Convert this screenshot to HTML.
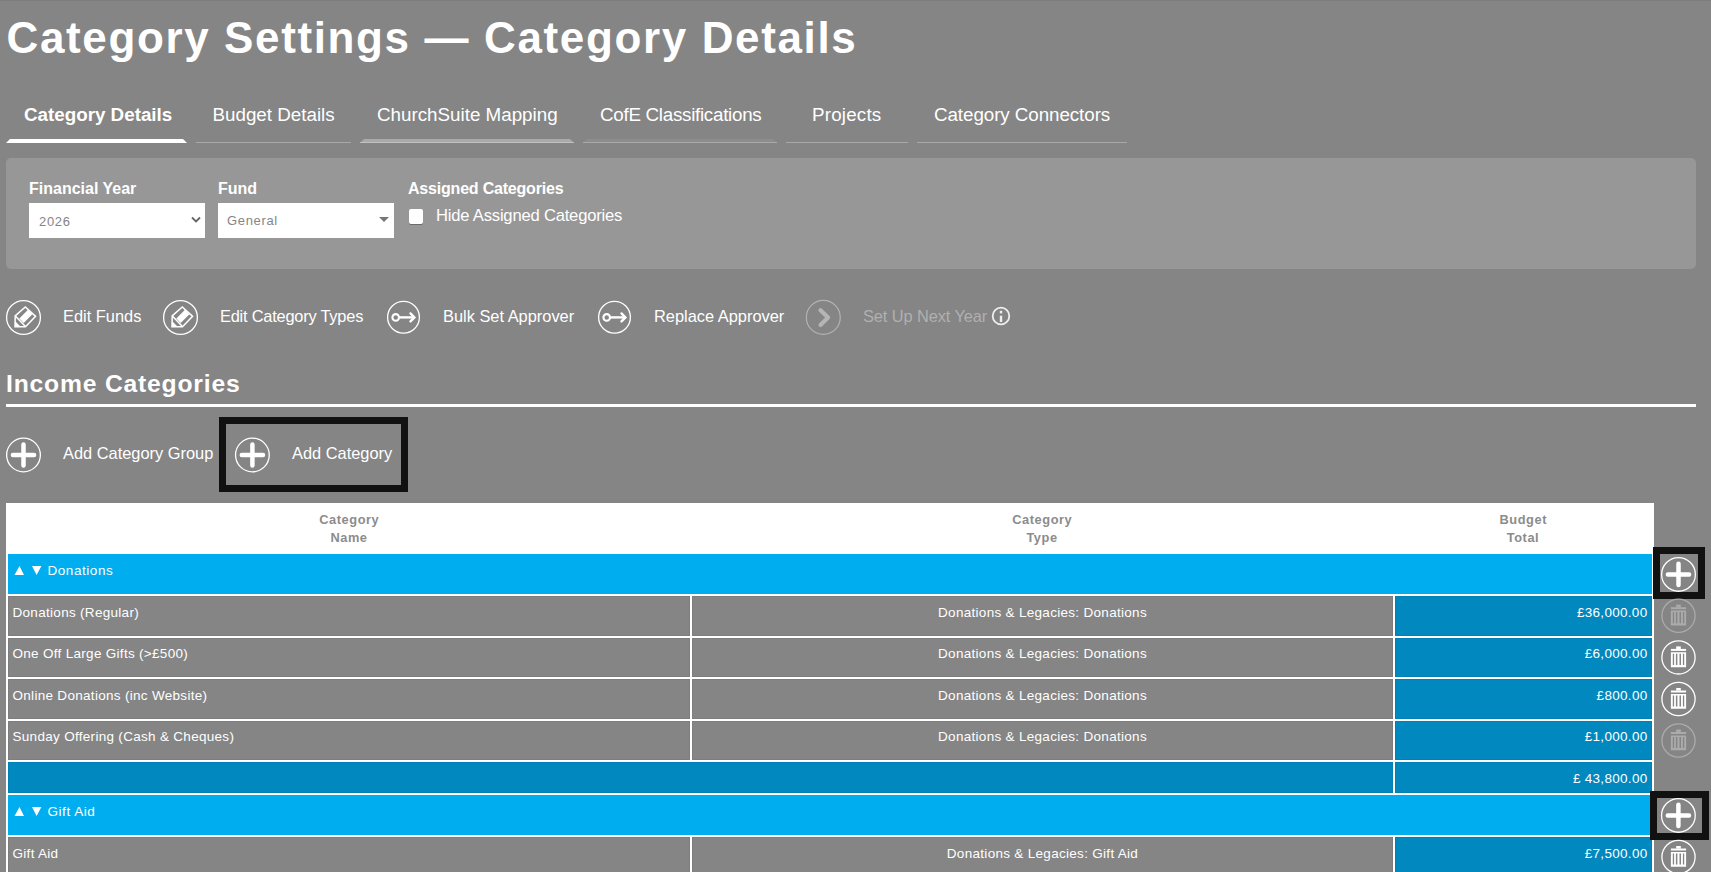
<!DOCTYPE html>
<html><head><meta charset="utf-8">
<style>
html,body{margin:0;padding:0;}
body{width:1711px;height:872px;overflow:hidden;position:relative;background:#858585;font-family:"Liberation Sans",sans-serif;color:#fff;}
.a{position:absolute;}
.t{position:absolute;white-space:nowrap;line-height:1;}
.b{font-weight:700;}
.bar{position:absolute;height:4px;}
.cell{position:absolute;box-sizing:border-box;border:1px solid rgba(0,0,0,0.055);}
.g{background:#858585;}
.db{background:#0088bf;}
.lb{background:#00aeef;}
svg{position:absolute;overflow:visible;}
.td{font-size:13.5px;letter-spacing:0.3px;color:#fff}
</style></head><body>
<div class="a" style="left:0;top:0;width:1711px;height:1px;background:#7d7d7d"></div>

<!-- Title -->
<div class="t b" id="title" style="left:6.5px;top:16px;font-size:44px;letter-spacing:1.63px">Category Settings — Category Details</div>

<!-- Tabs -->
<div class="t b" style="left:24px;top:106px;font-size:18.8px">Category Details</div>
<div class="t" style="left:212.5px;top:106px;font-size:18.8px">Budget Details</div>
<div class="t" style="left:377px;top:106px;font-size:18.8px">ChurchSuite Mapping</div>
<div class="t" style="left:600px;top:106px;font-size:18.8px;letter-spacing:-0.28px">CofE Classifications</div>
<div class="t" style="left:812px;top:106px;font-size:18.8px;letter-spacing:0.2px">Projects</div>
<div class="t" style="left:934px;top:106px;font-size:18.8px;letter-spacing:-0.07px">Category Connectors</div>

<div class="bar" style="left:6px;top:139px;width:181px;background:#fff;clip-path:polygon(4px 0,177px 0,181px 4px,0 4px)"></div>
<div class="a" style="left:196px;top:142px;width:155px;height:1px;background:#a9a9a9"></div>
<div class="bar" style="left:360px;top:139px;width:214px;background:#aaaaaa;clip-path:polygon(4px 0,210px 0,214px 4px,0 4px)"></div>
<div class="a" style="left:360px;top:142px;width:214px;height:1px;background:#c0c0c0"></div>
<div class="bar" style="left:583px;top:139px;width:194px;background:#8d8d8d;clip-path:polygon(4px 0,190px 0,194px 4px,0 4px)"></div>
<div class="a" style="left:583px;top:142px;width:194px;height:1px;background:#a9a9a9"></div>
<div class="a" style="left:786px;top:142px;width:122px;height:1px;background:#a9a9a9"></div>
<div class="a" style="left:917px;top:142px;width:210px;height:1px;background:#a9a9a9"></div>

<!-- Panel -->
<div class="a" style="left:6px;top:158px;width:1690px;height:111px;background:#979797;border-radius:5px"></div>
<div class="t b" style="left:29px;top:181px;font-size:16px">Financial Year</div>
<div class="t b" style="left:218px;top:181px;font-size:16px">Fund</div>
<div class="t b" style="left:408px;top:181px;font-size:16px;letter-spacing:-0.2px">Assigned Categories</div>

<div class="a" style="left:29px;top:203px;width:176px;height:35px;background:#fff"></div>
<div class="t" style="left:39px;top:215px;font-size:13px;color:#858585;letter-spacing:0.7px">2026</div>
<svg style="left:191px;top:216px" width="10" height="8"><path d="M1 1.5 L5 5.5 L9 1.5" fill="none" stroke="#666" stroke-width="1.8"/></svg>

<div class="a" style="left:218px;top:203px;width:176px;height:35px;background:#fff"></div>
<div class="t" style="left:227px;top:214px;font-size:13px;color:#858585;letter-spacing:0.65px">General</div>
<svg style="left:379px;top:217px" width="10" height="6"><path d="M0 0 L10 0 L5 5 Z" fill="#777"/></svg>

<div class="a" style="left:409px;top:209px;width:14px;height:15px;background:#fff;border-radius:2px;box-shadow:0 1px 0 #6a6a6a"></div>
<div class="t" style="left:436px;top:208px;font-size:16.6px;letter-spacing:-0.2px">Hide Assigned Categories</div>

<!-- Action row -->
<svg style="left:0;top:290px" width="1100" height="60">
  <g fill="none" stroke="#fff" stroke-width="1.3">
    <circle cx="23.5" cy="27.5" r="16.9"/>
    <circle cx="180.5" cy="27.5" r="16.9"/>
    <circle cx="403.5" cy="27.3" r="15.9"/>
    <circle cx="614.5" cy="27.3" r="15.9"/>
  </g>
  <g transform="translate(0 0)" fill="none" stroke="#fff" stroke-width="1.5">
    <path d="M15.2 25.9 L25.3 16.9 L35.6 26.4 L25.5 36.7 L15 36.7 Z"/>
    <path d="M15.6 26.3 L25.2 36.3"/>
    <path d="M28.0 19.8 L32.4 24.2 L23.7 32.9 L19.3 28.5 Z" fill="#fff" stroke="none"/>
    <path d="M15 31 L15 36.7 L20.7 36.7 Z" fill="#fff" stroke="none"/>
  </g>
  <g transform="translate(157 0)" fill="none" stroke="#fff" stroke-width="1.5">
    <path d="M15.2 25.9 L25.3 16.9 L35.6 26.4 L25.5 36.7 L15 36.7 Z"/>
    <path d="M15.6 26.3 L25.2 36.3"/>
    <path d="M28.0 19.8 L32.4 24.2 L23.7 32.9 L19.3 28.5 Z" fill="#fff" stroke="none"/>
    <path d="M15 31 L15 36.7 L20.7 36.7 Z" fill="#fff" stroke="none"/>
  </g>
  <g fill="none" stroke="#fff" stroke-width="2.4" stroke-linecap="round">
    <circle cx="395.7" cy="27.4" r="3.3" stroke-width="2.1"/>
    <path d="M399.1 27.4 H414.3" stroke-linecap="butt"/>
    <path d="M410.5 23.4 L414.4 27.4 L410.5 31.4"/>
  </g>
  <g fill="none" stroke="#fff" stroke-width="2.4" stroke-linecap="round">
    <circle cx="606.7" cy="27.4" r="3.3" stroke-width="2.1"/>
    <path d="M610.1 27.4 H625.3" stroke-linecap="butt"/>
    <path d="M621.5 23.4 L625.4 27.4 L621.5 31.4"/>
  </g>
  <circle cx="823.3" cy="27.4" r="16.95" fill="none" stroke="#b3b3b3" stroke-width="1.2"/>
  <path d="M820.5 20.3 L828.1 27.5 L820.5 34.9" fill="none" stroke="#b5b5b5" stroke-width="4.2" stroke-linecap="round" stroke-linejoin="round"/>
  <circle cx="1001" cy="26" r="8.3" fill="none" stroke="#eee" stroke-width="1.8"/>
  <rect x="999.8" y="20.8" width="2.4" height="2.6" fill="#eee"/>
  <rect x="999.8" y="25.7" width="2.4" height="6.3" fill="#eee"/>
</svg>

<div class="t" style="left:63px;top:308px;font-size:16.4px">Edit Funds</div>
<div class="t" style="left:220px;top:308px;font-size:16.4px;letter-spacing:-0.22px">Edit Category Types</div>
<div class="t" style="left:443px;top:308px;font-size:16.4px">Bulk Set Approver</div>
<div class="t" style="left:654px;top:308px;font-size:16.4px">Replace Approver</div>
<div class="t" style="left:863px;top:308px;font-size:16.4px;color:#b0b0b0;letter-spacing:-0.1px">Set Up Next Year</div>

<!-- Income Categories -->
<div class="t b" style="left:6px;top:372px;font-size:24.7px;letter-spacing:0.8px">Income Categories</div>
<div class="a" style="left:6px;top:404px;width:1690px;height:3px;background:#fff"></div>

<svg style="left:0;top:420px" width="300" height="70">
  <g fill="none" stroke="#fff">
    <circle cx="23.5" cy="35" r="16.85" stroke-width="1.3"/>
    <path d="M12.9 35 H34.1 M23.5 24.4 V45.6" stroke-width="4.5" stroke-linecap="round"/>
    <circle cx="252.4" cy="35" r="16.85" stroke-width="1.3"/>
    <path d="M241.8 35 H263 M252.4 24.4 V45.6" stroke-width="4.5" stroke-linecap="round"/>
  </g>
</svg>
<div class="t" style="left:63px;top:445px;font-size:16.4px">Add Category Group</div>
<div class="t" style="left:292px;top:445px;font-size:16.4px">Add Category</div>
<div class="a" style="left:219px;top:417px;width:175px;height:61px;border:7px solid #111"></div>

<!-- Table -->
<div class="a" style="left:6px;top:503px;width:1648px;height:400px;background:#fff"></div>
<div class="t b" style="left:269px;top:511px;width:160px;text-align:center;font-size:12.8px;line-height:18px;color:#8c8c8c;white-space:normal;letter-spacing:0.55px;text-indent:0.55px">Category<br>Name</div>
<div class="t b" style="left:962px;top:511px;width:160px;text-align:center;font-size:12.8px;line-height:18px;color:#8c8c8c;white-space:normal;letter-spacing:0.55px;text-indent:0.55px">Category<br>Type</div>
<div class="t b" style="left:1443px;top:511px;width:160px;text-align:center;font-size:12.8px;line-height:18px;color:#8c8c8c;white-space:normal;letter-spacing:0.55px;text-indent:0.55px">Budget<br>Total</div>

<!--ROWS-->
<div class="a lb" style="left:8px;top:554px;width:1644px;height:40px"></div>
<svg style="left:14px;top:566px" width="30" height="10"><path d="M0.5 9 L5.5 0 L10 9 Z M18 0 L27.4 0 L22.6 9 Z" fill="#fff"/></svg>
<div class="t td" style="left:47.5px;top:564px;letter-spacing:0.55px">Donations</div>
<div class="cell g" style="left:8px;top:596px;width:682px;height:40px"></div>
<div class="cell g" style="left:692px;top:596px;width:701px;height:40px"></div>
<div class="cell db" style="left:1395px;top:596px;width:257px;height:40px"></div>
<div class="t td" style="left:12.5px;top:606px">Donations (Regular)</div>
<div class="t td" style="left:692px;width:701px;text-align:center;top:606px">Donations &amp; Legacies: Donations</div>
<div class="t td" style="right:63.5px;top:606px">£36,000.00</div>
<div class="cell g" style="left:8px;top:638px;width:682px;height:39px"></div>
<div class="cell g" style="left:692px;top:638px;width:701px;height:39px"></div>
<div class="cell db" style="left:1395px;top:638px;width:257px;height:39px"></div>
<div class="t td" style="left:12.5px;top:647px">One Off Large Gifts (&gt;£500)</div>
<div class="t td" style="left:692px;width:701px;text-align:center;top:647px">Donations &amp; Legacies: Donations</div>
<div class="t td" style="right:63.5px;top:647px">£6,000.00</div>
<div class="cell g" style="left:8px;top:679px;width:682px;height:40px"></div>
<div class="cell g" style="left:692px;top:679px;width:701px;height:40px"></div>
<div class="cell db" style="left:1395px;top:679px;width:257px;height:40px"></div>
<div class="t td" style="left:12.5px;top:689px">Online Donations (inc Website)</div>
<div class="t td" style="left:692px;width:701px;text-align:center;top:689px">Donations &amp; Legacies: Donations</div>
<div class="t td" style="right:63.5px;top:689px">£800.00</div>
<div class="cell g" style="left:8px;top:721px;width:682px;height:39px"></div>
<div class="cell g" style="left:692px;top:721px;width:701px;height:39px"></div>
<div class="cell db" style="left:1395px;top:721px;width:257px;height:39px"></div>
<div class="t td" style="left:12.5px;top:729.5px">Sunday Offering (Cash &amp; Cheques)</div>
<div class="t td" style="left:692px;width:701px;text-align:center;top:729.5px">Donations &amp; Legacies: Donations</div>
<div class="t td" style="right:63.5px;top:729.5px">£1,000.00</div>
<div class="cell db" style="left:8px;top:762px;width:1385px;height:31px"></div>
<div class="cell db" style="left:1395px;top:762px;width:257px;height:31px"></div>
<div class="t td" style="right:63.5px;top:772px">£ 43,800.00</div>
<div class="a lb" style="left:8px;top:795px;width:1644px;height:40px"></div>
<svg style="left:14px;top:807px" width="30" height="10"><path d="M0.5 9 L5.5 0 L10 9 Z M18 0 L27.4 0 L22.6 9 Z" fill="#fff"/></svg>
<div class="t td" style="left:47.5px;top:805px;letter-spacing:0.55px">Gift Aid</div>
<div class="cell g" style="left:8px;top:837px;width:682px;height:40px"></div>
<div class="cell g" style="left:692px;top:837px;width:701px;height:40px"></div>
<div class="cell db" style="left:1395px;top:837px;width:257px;height:40px"></div>
<div class="t td" style="left:12.5px;top:847px">Gift Aid</div>
<div class="t td" style="left:692px;width:701px;text-align:center;top:847px">Donations &amp; Legacies: Gift Aid</div>
<div class="t td" style="right:63.5px;top:847px">£7,500.00</div>
<div class="a" style="left:1653px;top:547px;width:38px;height:38px;border:7px solid #111;background:#858585"></div>
<svg style="left:0;top:0" width="1" height="1"><g fill="none" stroke="#fff"><circle cx="1678.5" cy="574.4" r="16.85" stroke-width="1.3"/><path d="M1667.9 574.4 H1689.1 M1678.5 563.8 V585.0" stroke-width="4.5" stroke-linecap="round"/></g></svg>
<svg style="left:0;top:0" width="1" height="1"><circle cx="1678.5" cy="615.7" r="16.6" fill="none" stroke="#ababab" stroke-width="1.3"/><g fill="#ababab"><rect x="1676.2" y="604.7" width="4.6" height="2.6"/><rect x="1670.9" y="607.2" width="15.2" height="2"/><path d="M1670.9 610.6 h15.2 v14.9 h-15.2 Z M1672.8000000000002 612.1 v11.1 h1.3 v-11.1 Z M1675.9 612.1 v11.1 h1.5 v-11.1 Z M1679.5 612.1 v11.1 h1.5 v-11.1 Z M1682.9 612.1 v11.1 h1.3 v-11.1 Z" fill-rule="evenodd"/></g></svg>
<svg style="left:0;top:0" width="1" height="1"><circle cx="1678.5" cy="657.4" r="16.6" fill="none" stroke="#fff" stroke-width="1.3"/><g fill="#fff"><rect x="1676.2" y="646.4" width="4.6" height="2.6"/><rect x="1670.9" y="648.9" width="15.2" height="2"/><path d="M1670.9 652.3 h15.2 v14.9 h-15.2 Z M1672.8000000000002 653.8 v11.1 h1.3 v-11.1 Z M1675.9 653.8 v11.1 h1.5 v-11.1 Z M1679.5 653.8 v11.1 h1.5 v-11.1 Z M1682.9 653.8 v11.1 h1.3 v-11.1 Z" fill-rule="evenodd"/></g></svg>
<svg style="left:0;top:0" width="1" height="1"><circle cx="1678.5" cy="699" r="16.6" fill="none" stroke="#fff" stroke-width="1.3"/><g fill="#fff"><rect x="1676.2" y="688" width="4.6" height="2.6"/><rect x="1670.9" y="690.5" width="15.2" height="2"/><path d="M1670.9 693.9 h15.2 v14.9 h-15.2 Z M1672.8000000000002 695.4 v11.1 h1.3 v-11.1 Z M1675.9 695.4 v11.1 h1.5 v-11.1 Z M1679.5 695.4 v11.1 h1.5 v-11.1 Z M1682.9 695.4 v11.1 h1.3 v-11.1 Z" fill-rule="evenodd"/></g></svg>
<svg style="left:0;top:0" width="1" height="1"><circle cx="1678.5" cy="740.5" r="16.6" fill="none" stroke="#ababab" stroke-width="1.3"/><g fill="#ababab"><rect x="1676.2" y="729.5" width="4.6" height="2.6"/><rect x="1670.9" y="732.0" width="15.2" height="2"/><path d="M1670.9 735.4 h15.2 v14.9 h-15.2 Z M1672.8000000000002 736.9 v11.1 h1.3 v-11.1 Z M1675.9 736.9 v11.1 h1.5 v-11.1 Z M1679.5 736.9 v11.1 h1.5 v-11.1 Z M1682.9 736.9 v11.1 h1.3 v-11.1 Z" fill-rule="evenodd"/></g></svg>
<div class="a" style="left:1650px;top:791px;width:45px;height:35px;border:7px solid #111;background:#858585"></div>
<svg style="left:0;top:0" width="1" height="1"><g fill="none" stroke="#fff"><circle cx="1678.4" cy="815.4" r="16.85" stroke-width="1.3"/><path d="M1667.8000000000002 815.4 H1689.0 M1678.4 804.8 V826.0" stroke-width="4.5" stroke-linecap="round"/></g></svg>
<svg style="left:0;top:0" width="1" height="1"><circle cx="1678.5" cy="857" r="16.6" fill="none" stroke="#fff" stroke-width="1.3"/><g fill="#fff"><rect x="1676.2" y="846" width="4.6" height="2.6"/><rect x="1670.9" y="848.5" width="15.2" height="2"/><path d="M1670.9 851.9 h15.2 v14.9 h-15.2 Z M1672.8000000000002 853.4 v11.1 h1.3 v-11.1 Z M1675.9 853.4 v11.1 h1.5 v-11.1 Z M1679.5 853.4 v11.1 h1.5 v-11.1 Z M1682.9 853.4 v11.1 h1.3 v-11.1 Z" fill-rule="evenodd"/></g></svg>
<!--/ROWS-->
</body></html>
